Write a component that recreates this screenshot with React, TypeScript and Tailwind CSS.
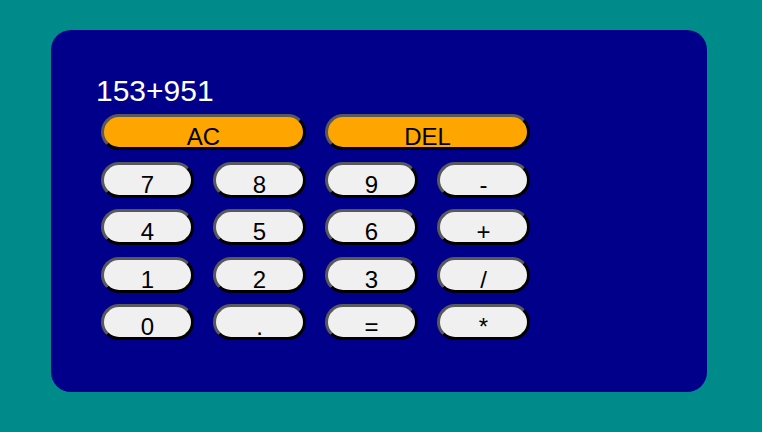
import React from 'react';

const keys = ['7', '8', '9', '-', '4', '5', '6', '+', '1', '2', '3', '/', '0', '.', '=', '*'];

const btnBase =
  'h-[36px] rounded-full border-[3px] border-t-[#595959] border-l-[#595959] border-b-black border-r-black text-[24px] leading-none pt-[8px] text-black';

export default function App() {
  return (
    <div className="min-h-[432px] w-[762px] bg-[#008b8b] pl-[51px] pt-[30px] font-['Liberation_Sans',Arial,sans-serif]">
      <div className="w-[656px] h-[362px] rounded-[20px] bg-[#00008b] pt-[46px] pl-[45px]">
        <div className="text-[30px] leading-none text-white h-[30px]">153+951</div>
        <div className="grid grid-cols-[repeat(4,93px)] gap-x-[19px] gap-y-[11.5px] mt-[8px] ml-[5px]">
          <button className={`${btnBase} col-span-2 bg-[#ffa500]`}>AC</button>
          <button className={`${btnBase} col-span-2 bg-[#ffa500]`}>DEL</button>
          {keys.map(k => (
            <button key={k} className={`${btnBase} bg-[#f0f0f0]`}>{k}</button>
          ))}
        </div>
      </div>
    </div>
  );
}
